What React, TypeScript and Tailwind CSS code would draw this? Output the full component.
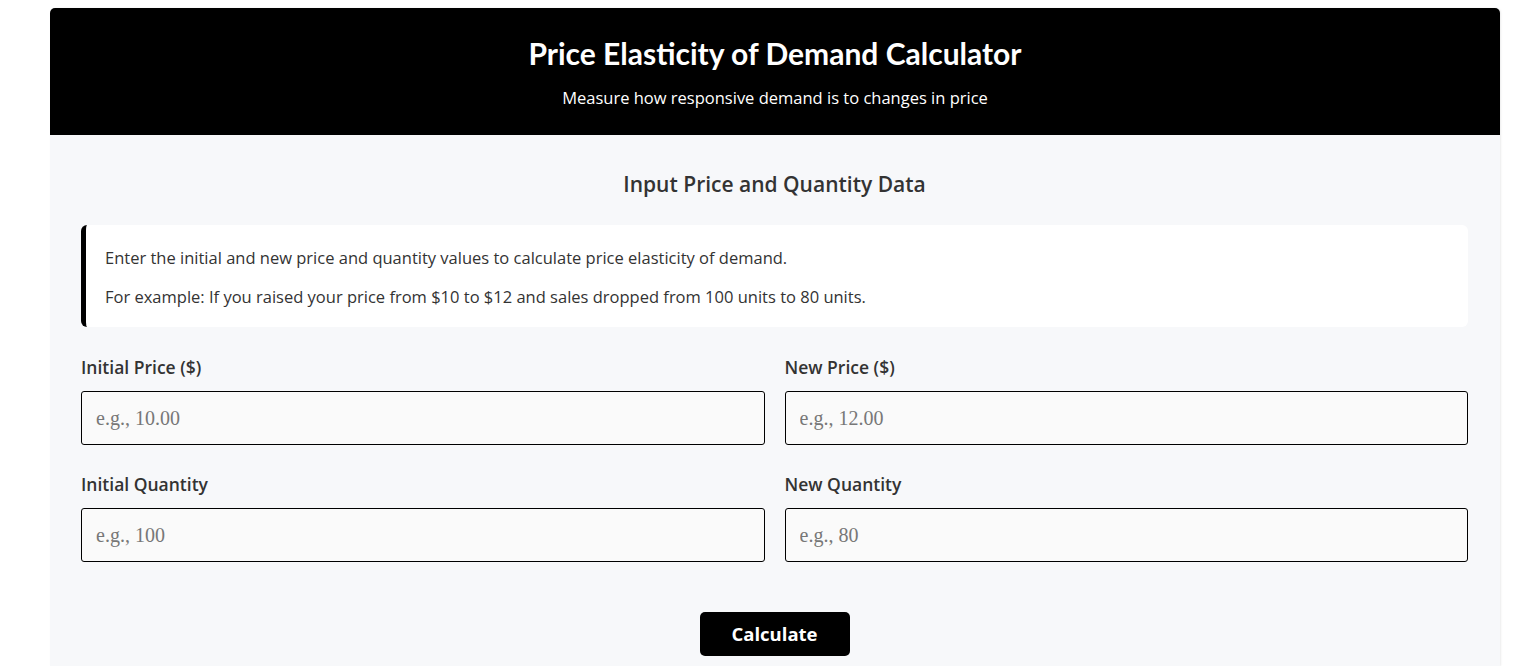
import React from "react";

const fields = [
  { label: "Initial Price ($)", placeholder: "e.g., 10.00" },
  { label: "New Price ($)", placeholder: "e.g., 12.00" },
  { label: "Initial Quantity", placeholder: "e.g., 100" },
  { label: "New Quantity", placeholder: "e.g., 80" },
];

const App = () => {
  return (
    <div className="min-h-screen bg-white pt-2 pl-[50px] font-['Open_Sans',sans-serif]">
      <div className="w-[1450px] rounded-t-[5px] overflow-hidden shadow-[1px_0_2px_rgba(0,0,0,0.08)]">
        <header className="bg-black text-white text-center pt-[27px] pb-[25px]">
          <h1 className="font-['Lato',sans-serif] font-bold text-[30px] leading-[36px]">
            Price Elasticity of Demand Calculator
          </h1>
          <p className="mt-[15px] text-[16.5px] leading-6">Measure how responsive demand is to changes in price</p>
        </header>

        <section className="bg-[#f7f8fa] pt-[35px] pb-[10px] pl-[31px] pr-[32px] text-[#333]">
          <h2 className="text-center text-[21px] leading-7 font-semibold">Input Price and Quantity Data</h2>

          <div className="mt-[27px] bg-white border-l-[5px] border-black rounded-md pl-[19px] pt-[21px] pb-[18px] text-[16.5px] leading-6">
            <p>Enter the initial and new price and quantity values to calculate price elasticity of demand.</p>
            <p className="mt-[15px]">For example: If you raised your price from $10 to $12 and sales dropped from 100 units to 80 units.</p>
          </div>

          <div className="mt-7 grid grid-cols-2 gap-x-5 gap-y-[27px]">
            {fields.map((f) => (
              <label key={f.label} className="flex flex-col">
                <span className="text-[17.5px] leading-6 font-semibold">{f.label}</span>
                <input
                  type="number"
                  placeholder={f.placeholder}
                  className="mt-3 h-[54px] px-[14px] bg-[#fafafa] border border-black rounded-[3px] font-['Liberation_Serif',serif] text-[20px] placeholder:text-[#777] outline-none"
                />
              </label>
            ))}
          </div>

          <div className="mt-[50px] flex justify-center">
            <button className="w-[150px] h-[44px] bg-black text-white rounded-[5px] font-bold text-[18.5px]">
              Calculate
            </button>
          </div>
        </section>
      </div>
    </div>
  );
};

export default App;
